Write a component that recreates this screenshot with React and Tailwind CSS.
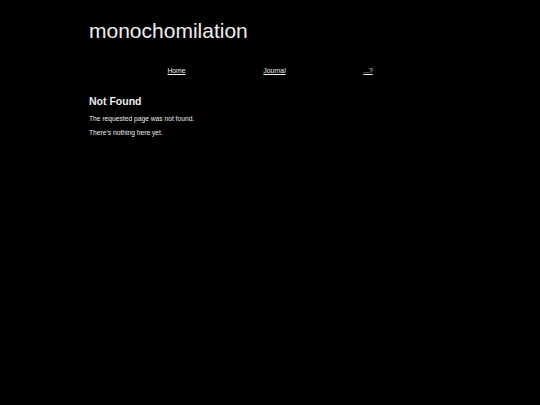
import React from "react";

const links = [
  { label: "Home", w: "w-[97px]" },
  { label: "Journal", w: "w-[99px]" },
  { label: "...?", w: "w-[88px]" },
];

export default function App() {
  return (
    <div className="min-h-[405px] bg-black text-[#eeeeee] font-['Liberation_Sans',Arial,sans-serif]">
      <div className="pl-[89px] pt-[17px]">
        <h1 className="text-[21px] leading-[28px] font-normal">monochomilation</h1>
        <ul className="flex mt-[21px] ml-[39px] text-[6.8px] leading-[10px]">
          {links.map((l) => (
            <li key={l.label} className={`${l.w} text-center`}>
              <a href="#" className="underline">
                {l.label}
              </a>
            </li>
          ))}
        </ul>
        <h2 className="mt-[18px] text-[10.5px] leading-[14px] font-bold">Not Found</h2>
        <p className="mt-[6px] text-[6.7px] leading-[10px]">The requested page was not found.</p>
        <p className="mt-[4px] text-[6.7px] leading-[10px]">There's nothing here yet.</p>
      </div>
    </div>
  );
}
